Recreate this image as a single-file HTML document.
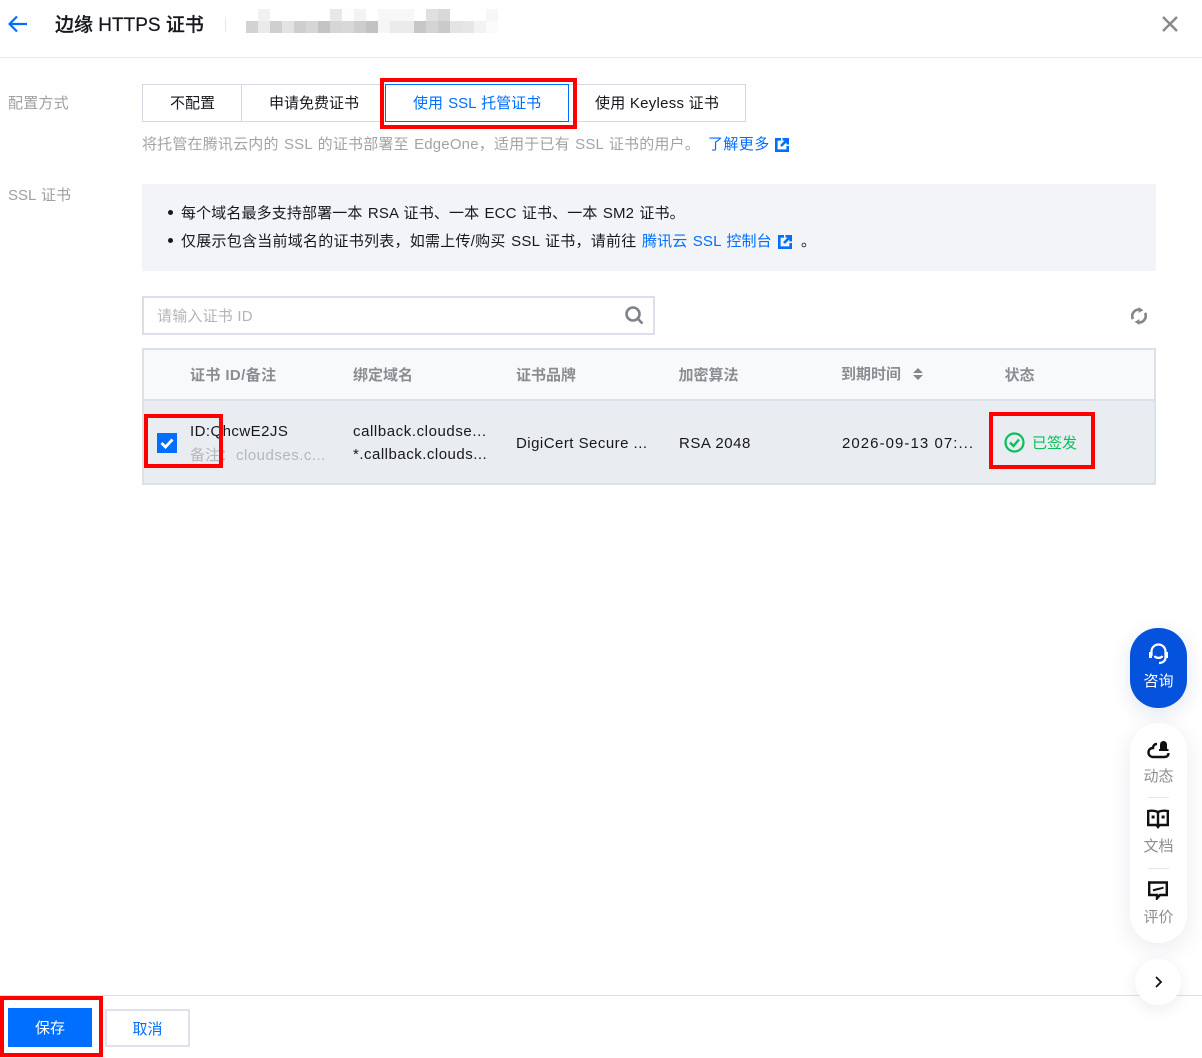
<!DOCTYPE html>
<html lang="zh-CN">
<head>
<meta charset="utf-8">
<title>边缘 HTTPS 证书</title>
<style>
html,body{margin:0;padding:0;background:#fff;}
body{position:relative;width:1202px;height:1058px;overflow:hidden;font-family:"Liberation Sans","Noto Sans CJK SC",sans-serif;font-size:15px;color:#16181d;}
.a{position:absolute;white-space:nowrap;}
.t{line-height:22px;height:22px;}
.g{color:#9a9a9a;}
.b{color:#006eff;}
.h{color:#8b8d92;font-weight:700;font-size:15px;}
.red{position:absolute;box-sizing:border-box;border:4px solid #f00;z-index:5;}
svg{position:absolute;display:block;}
</style>
</head>
<body>
<svg style="left:246px;top:9px" width="252" height="24" shape-rendering="crispEdges">
<g>
<rect x="12" width="12" height="12" fill="#f1f1f1"/><rect x="84" width="12" height="12" fill="#e8e8e8"/><rect x="96" width="12" height="12" fill="#fdfdfd"/><rect x="108" width="12" height="12" fill="#f3f3f3"/><rect x="132" width="36" height="12" fill="#f7f7f7"/><rect x="180" width="12" height="12" fill="#e0e0e0"/><rect x="192" width="12" height="12" fill="#d8d8d8"/><rect x="240" width="12" height="12" fill="#f7f7f7"/>
</g>
<g transform="translate(0,12)">
<rect x="0" width="12" height="12" fill="#d2d2d2"/><rect x="12" width="12" height="12" fill="#e9ebea"/><rect x="24" width="12" height="12" fill="#cfcfcf"/><rect x="36" width="12" height="12" fill="#e3e3e3"/><rect x="48" width="12" height="12" fill="#cecece"/><rect x="60" width="12" height="12" fill="#d6d6d6"/><rect x="72" width="12" height="12" fill="#c4c4c4"/><rect x="84" width="12" height="12" fill="#d6d6d6"/><rect x="96" width="12" height="12" fill="#d8d8d8"/><rect x="108" width="12" height="12" fill="#cdcdcd"/><rect x="120" width="12" height="12" fill="#c2c2c2"/><rect x="132" width="12" height="12" fill="#f6f6f6"/><rect x="144" width="24" height="12" fill="#ebebeb"/><rect x="168" width="12" height="12" fill="#c6c8c7"/><rect x="180" width="12" height="12" fill="#d4d4d4"/><rect x="192" width="12" height="12" fill="#cacaca"/><rect x="204" width="12" height="12" fill="#e3e5e4"/><rect x="216" width="12" height="12" fill="#e6e6e6"/><rect x="228" width="12" height="12" fill="#f3f3f3"/><rect x="240" width="12" height="12" fill="#fbfbfb"/>
</g>
</svg>

<!-- header -->
<svg style="left:8px;top:14px" width="20" height="20" viewBox="0 0 20 20" fill="none" stroke="#006eff" stroke-width="2.2"><path d="M1.5 10H19M9 2.5L1.5 10L9 17.5"/></svg>
<div class="a" style="left:55px;top:12px;font-size:19px;line-height:27px;color:#16181d;font-weight:500;-webkit-text-stroke:.2px #16181d">边缘 HTTPS 证书</div>
<div class="a" style="left:225px;top:17px;width:1px;height:15px;background:#e6e8ee"></div>
<svg style="left:1161px;top:15px" width="18" height="18" viewBox="0 0 18 18" fill="none" stroke="#888" stroke-width="2.4"><path d="M2 2L16 16M16 2L2 16"/></svg>
<div class="a" style="left:0;top:57px;width:1202px;height:1px;background:#e7e8ec"></div>

<!-- config -->
<div class="a t g" style="left:8px;top:93px;color:#a0a0a0;letter-spacing:.2px">配置方式</div>
<div class="a" style="left:142px;top:84px;width:604px;height:38px;box-sizing:border-box;border:1px solid #d5d9e3"></div>
<div class="a" style="left:241px;top:84px;width:1px;height:38px;background:#d5d9e3"></div>
<div class="a t" style="left:170px;top:93px">不配置</div>
<div class="a t" style="left:269px;top:93px">申请免费证书</div>
<div class="a" style="left:385px;top:84px;width:184px;height:38px;box-sizing:border-box;border:1px solid #006eff;background:#fff"></div>
<div class="a t b" style="left:413px;top:93px;word-spacing:1px">使用 SSL 托管证书</div>
<div class="a t" style="left:595px;top:93px;letter-spacing:.25px">使用 Keyless 证书</div>
<div class="red" style="left:380px;top:78px;width:197px;height:51px"></div>

<div class="a t g" style="left:142px;top:134px;color:#a3a3a3;word-spacing:1px;letter-spacing:.18px">将托管在腾讯云内的 SSL 的证书部署至 EdgeOne，适用于已有 SSL 证书的用户。</div>
<div class="a t b" style="left:708px;top:134px;letter-spacing:.4px">了解更多</div>
<svg style="left:775px;top:138px" width="14" height="14" viewBox="0 0 14 14" fill="none" stroke="#006eff" stroke-width="2.6"><path d="M6 1.3H1.3V12.7H12.7V8M7.5 1.3H12.7V6.5M12.7 1.3L6 8"/></svg>

<!-- ssl -->
<div class="a t g" style="left:8px;top:185px;color:#a0a0a0;word-spacing:1px">SSL 证书</div>
<div class="a" style="left:142px;top:184px;width:1014px;height:87px;background:#f3f4f7"></div>
<div class="a" style="left:168px;top:210px;width:5px;height:5px;border-radius:50%;background:#16181d"></div>
<div class="a" style="left:168px;top:238px;width:5px;height:5px;border-radius:50%;background:#16181d"></div>
<div class="a t" style="left:181px;top:203px;word-spacing:1px;letter-spacing:.13px">每个域名最多支持部署一本 RSA 证书、一本 ECC 证书、一本 SM2 证书。</div>
<div class="a t" style="left:181px;top:231px;word-spacing:1px;letter-spacing:.25px">仅展示包含当前域名的证书列表，如需上传/购买 SSL 证书，请前往</div>
<div class="a t b" style="left:642px;top:231px;word-spacing:1px;letter-spacing:.15px">腾讯云 SSL 控制台</div>
<svg style="left:778px;top:235px" width="14" height="14" viewBox="0 0 14 14" fill="none" stroke="#006eff" stroke-width="2.6"><path d="M6 1.3H1.3V12.7H12.7V8M7.5 1.3H12.7V6.5M12.7 1.3L6 8"/></svg>
<div class="a t" style="left:801px;top:231px">。</div>

<!-- search -->
<div class="a" style="left:142px;top:296px;width:513px;height:39px;box-sizing:border-box;border:2px solid #dcdfe8"></div>
<div class="a t" style="left:157px;top:306px;color:#b5b5b5;letter-spacing:.2px">请输入证书 ID</div>
<svg style="left:624px;top:305px" width="20" height="20" viewBox="0 0 20 20" fill="none" stroke="#7f8287" stroke-width="2.6"><circle cx="9" cy="9" r="6.5"/><path d="M13.5 13.5L18.5 18.5"/></svg>
<svg style="left:1131px;top:307px" width="16" height="18" viewBox="0 0 18 20" fill="none" stroke="#888" stroke-width="3"><path d="M2.2 13.5A7.4 7.4 0 0 1 10.5 3"/><path d="M15.8 6.5A7.4 7.4 0 0 1 7.5 17"/><path d="M8.5 0L14 3.4L8.5 6.5Z" fill="#888" stroke="none"/><path d="M9.5 20L4 16.6L9.5 13.5Z" fill="#888" stroke="none"/></svg>

<!-- table -->
<div class="a" style="left:142px;top:348px;width:1014px;height:137px;box-sizing:border-box;border:2px solid #dde0e9;background:#e9ecf1"></div>
<div class="a" style="left:144px;top:350px;width:1010px;height:49px;background:#f8f9fb;border-bottom:2px solid #dde0e9"></div>
<div class="a t h" style="left:190px;top:365px;letter-spacing:.4px">证书 ID/备注</div>
<div class="a t h" style="left:353px;top:365px">绑定域名</div>
<div class="a t h" style="left:516px;top:365px">证书品牌</div>
<div class="a t h" style="left:678.5px;top:365px">加密算法</div>
<div class="a t h" style="left:841px;top:364px">到期时间</div>
<svg style="left:913px;top:368px" width="10" height="12" viewBox="0 0 10 12" fill="#85888d"><path d="M5 0L10 5H0ZM0 7H10L5 12Z"/></svg>
<div class="a t h" style="left:1004.5px;top:365px">状态</div>

<div class="a" style="left:157px;top:433px;width:20px;height:20px;background:#006eff"></div>
<svg style="left:157px;top:433px" width="20" height="20" viewBox="0 0 20 20" fill="none" stroke="#fff" stroke-width="2.8"><path d="M4.5 10L8.5 14L15.5 6.5"/></svg>
<div class="a t" style="left:190px;top:421px;letter-spacing:.45px">ID:QhcwE2JS</div>
<div class="a t" style="left:190px;top:445px;color:#b5b7bb">备注：</div>
<div class="a t" style="left:236px;top:445px;color:#b5b7bb;letter-spacing:.5px">cloudses.c...</div>
<div class="a t" style="left:353px;top:421px;letter-spacing:.58px">callback.cloudse...</div>
<div class="a t" style="left:353px;top:444px;letter-spacing:.5px">*.callback.clouds...</div>
<div class="a t" style="left:516px;top:433px;letter-spacing:.47px">DigiCert Secure ...</div>
<div class="a t" style="left:679px;top:433px;letter-spacing:.55px">RSA 2048</div>
<div class="a t" style="left:842px;top:433px;letter-spacing:1.05px">2026-09-13 07:...</div>
<svg style="left:1004px;top:432px" width="21" height="21" viewBox="0 0 21 21" fill="none" stroke="#0abf5b" stroke-width="2.2"><circle cx="10.5" cy="10.5" r="9"/><path d="M6 10.5L9.5 14L15 7.5" stroke-width="2.4"/></svg>
<div class="a t" style="left:1032px;top:433px;color:#0abf5b">已签发</div>
<div class="red" style="left:144px;top:414px;width:79px;height:54px"></div>
<div class="red" style="left:989px;top:412px;width:106px;height:57px"></div>

<!-- footer -->
<div class="a" style="left:0;top:995px;width:1202px;height:1px;background:#dcdfe7"></div>
<div class="a" style="left:8px;top:1008px;width:84px;height:39px;background:#006eff;color:#fff;text-align:center;line-height:42px">保存</div>
<div class="a" style="left:105px;top:1009px;width:85px;height:38px;box-sizing:border-box;border:2px solid #dfe2ea;background:#fff;color:#006eff;text-align:center;line-height:37px">取消</div>
<div class="red" style="left:0;top:996px;width:103px;height:61px"></div>

<!-- floating -->
<div class="a" style="left:1130px;top:628px;width:57px;height:80px;border-radius:28px;background:#0553dc;box-shadow:0 6px 20px rgba(0,40,120,.12)"></div>
<svg style="left:1147px;top:642px" width="23" height="24" viewBox="0 0 23 24" fill="none" stroke="#fff" stroke-width="2.2"><path d="M4.5 14V9.5A7 7 0 0 1 18.5 9.5V15.5C18.5 19 15.5 21 12 21"/><path d="M7.5 14C9 16.5 14 16.5 15.5 14"/><rect x="2" y="10" width="3" height="6" fill="#fff" stroke="none"/><rect x="18" y="10" width="3" height="6" fill="#fff" stroke="none"/></svg>
<div class="a" style="left:1130px;top:671px;width:57px;text-align:center;color:#fff;line-height:22px">咨询</div>

<div class="a" style="left:1130px;top:723px;width:57px;height:220px;border-radius:28px;background:#fff;box-shadow:0 6px 24px rgba(0,30,80,.09)"></div>
<svg style="left:1147px;top:739px" width="23" height="20" viewBox="0 0 23 20" fill="none" stroke="#111" stroke-width="2.4"><path d="M10 5C7 5 6 7 6 9C3 9 1.5 11 1.5 13.5C1.5 16.5 4 18 6 18H17C20 18 21.5 16.5 21.5 14"/><path d="M13 10V5.5A3.5 3.5 0 0 1 20 5.5V10H21.5V12H12V10Z" fill="#111" stroke="none"/></svg>
<div class="a" style="left:1130px;top:766px;width:57px;text-align:center;color:#8f8f8f;line-height:22px">动态</div>
<div class="a" style="left:1148px;top:797px;width:21px;height:1px;background:#e3e6ef"></div>
<svg style="left:1147px;top:809px" width="22" height="20" viewBox="0 0 22 20" fill="none" stroke="#111" stroke-width="2.4"><path d="M11 3V17M11 3C8 1.5 4 1.5 1.2 2V16H9.5L11 18L12.5 16H20.8V2C18 1.5 14 1.5 11 3Z"/><rect x="4.6" y="6.5" width="3" height="3" fill="#111" stroke="none"/><rect x="14.6" y="6.5" width="3" height="3" fill="#111" stroke="none"/></svg>
<div class="a" style="left:1130px;top:836px;width:57px;text-align:center;color:#8f8f8f;line-height:22px">文档</div>
<div class="a" style="left:1148px;top:868px;width:21px;height:1px;background:#e3e6ef"></div>
<svg style="left:1148px;top:881px" width="20" height="19" viewBox="0 0 20 19" fill="none" stroke="#111" stroke-width="2.4"><path d="M1.2 1.5H18.8V14H12L9 17.5V14H1.2Z"/><path d="M5 9.5C8 8 12 8 15.5 6.5" stroke-width="2"/></svg>
<div class="a" style="left:1130px;top:907px;width:57px;text-align:center;color:#8f8f8f;line-height:22px">评价</div>

<div class="a" style="left:1135px;top:959px;width:46px;height:46px;border-radius:50%;background:#fff;box-shadow:0 4px 16px rgba(0,30,80,.08)"></div>
<svg style="left:1154px;top:976px" width="9" height="12" viewBox="0 0 9 12" fill="none" stroke="#111" stroke-width="1.8"><path d="M2 1L7 6L2 11"/></svg>
</body>
</html>
